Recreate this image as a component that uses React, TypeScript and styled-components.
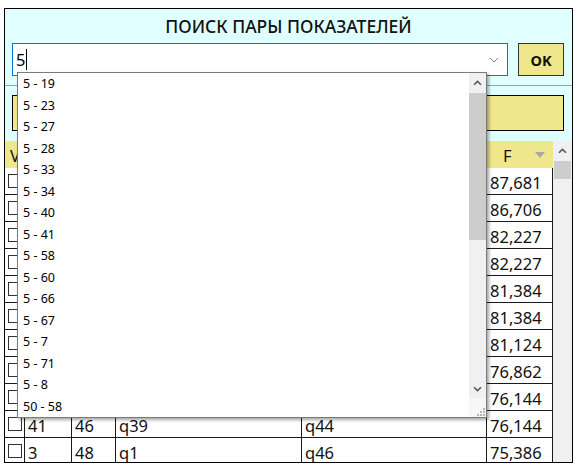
import React from 'react';
import styled, { createGlobalStyle } from 'styled-components';

const GlobalStyle = createGlobalStyle`
  html, body {
    margin: 0;
    padding: 0;
    background: #fff;
  }
  body {
    font-family: 'Noto Sans', 'Open Sans', sans-serif;
  }
`;

const Frame = styled.div`
  position: relative;
  box-sizing: border-box;
  margin: 8px 0 0 4px;
  width: 569px;
  height: 455px;
  border: 1px solid #000;
  background: #e0ffff;
  overflow: hidden;
  display: flex;
  flex-direction: column;
`;

const Title = styled.div`
  height: 34px;
  display: flex;
  align-items: center;
  justify-content: center;
  font-size: 17.5px;
  font-weight: 500;
  color: #111;
`;

const SearchRow = styled.div`
  display: flex;
  gap: 10px;
  padding: 0 8px 0 7px;
  height: 33px;
`;

const Combo = styled.div`
  flex: 1;
  box-sizing: border-box;
  border: 1px solid #0078d7;
  background: #fff;
  display: flex;
  align-items: center;
  padding: 0 8px 0 3px;
  font-size: 16.5px;
  color: #000;
`;

const Caret = styled.span`
  display: inline-block;
  width: 1px;
  height: 21px;
  background: #000;
  margin-left: 1px;
`;

const ComboValue = styled.div`
  flex: 1;
  display: flex;
  align-items: center;
`;

const OkButton = styled.button`
  box-sizing: border-box;
  width: 46px;
  height: 33px;
  border: 1px solid #333;
  background: #f0e68c;
  font-family: 'Noto Sans', sans-serif;
  font-size: 14.5px;
  font-weight: 700;
  color: #111;
  padding: 0;
`;

const Separator = styled.div`
  margin-top: 9px;
  height: 1px;
  background: #a0a0a0;
`;

const InfoBox = styled.div`
  box-sizing: border-box;
  margin: 9px 8px 0 7px;
  height: 36px;
  border: 1px solid #000;
  background: #f0e68c;
`;

const TableArea = styled.div`
  margin-top: 10px;
  flex: 1;
  display: flex;
  min-height: 0;
`;

const Grid = styled.div`
  width: 548px;
  background: #fff;
`;

const columns = '20px 47px 44px 186px 185px 66px';

const HeaderRow = styled.div`
  display: grid;
  grid-template-columns: ${columns};
  height: 27px;
  background: #f0e68c;
`;

const HeaderCell = styled.div`
  display: flex;
  align-items: center;
  justify-content: space-between;
  padding: 1px 8px 0 5px;
  font-size: 16.5px;
  color: #111;
  box-sizing: border-box;
`;

const Row = styled.div`
  display: grid;
  grid-template-columns: ${columns};
  height: 27px;
`;

const Cell = styled.div`
  box-sizing: border-box;
  display: flex;
  align-items: center;
  padding: 2px 0 0 3px;
  border-right: 1px solid #1a1a1a;
  border-bottom: 1px solid #1a1a1a;
  font-size: 16.5px;
  color: #111;
  white-space: nowrap;
`;

const CheckCell = styled(Cell)`
  padding: 0 0 0 3px;
`;

const Box = styled.span`
  box-sizing: border-box;
  width: 14px;
  height: 14px;
  border: 1px solid #333;
  background: #fff;
`;

const VScroll = styled.div`
  width: 19px;
  background: #f0f0f0;
  display: flex;
  flex-direction: column;
  align-items: center;
`;

const ArrowButton = styled.div<{ $h: number }>`
  height: ${p => p.$h}px;
  width: 100%;
  display: flex;
  align-items: center;
  justify-content: center;
`;

const Thumb = styled.div<{ $h: number; $w: number }>`
  width: ${p => p.$w}px;
  height: ${p => p.$h}px;
  background: #cdcdcd;
`;

const Spacer = styled.div`
  flex: 1;
`;

const Dropdown = styled.div`
  position: absolute;
  left: 12px;
  top: 63px;
  box-sizing: border-box;
  width: 470px;
  height: 346px;
  border: 1px solid #7a7a7a;
  background: #fff;
  box-shadow: 2px 2px 3px rgba(0, 0, 0, 0.35);
  display: flex;
`;

const List = styled.div`
  flex: 1;
  overflow: hidden;
`;

const Item = styled.div`
  height: 21.5px;
  line-height: 21.5px;
  padding-left: 5px;
  font-size: 12.5px;
  color: #000;
`;

const DropScroll = styled.div`
  width: 17px;
  background: #f0f0f0;
  display: flex;
  flex-direction: column;
`;

const Grip = styled.div`
  height: 19px;
  background: #f7f7f7;
  display: flex;
  align-items: flex-end;
  justify-content: flex-end;
`;

const Chevron: React.FC<{ down?: boolean }> = ({ down }) => (
  <svg width="9" height="6" viewBox="0 0 9 6">
    <path
      d={down ? 'M1 1.2 L4.5 4.6 L8 1.2' : 'M1 4.8 L4.5 1.4 L8 4.8'}
      fill="none"
      stroke="#5a5a5a"
      strokeWidth="1.6"
    />
  </svg>
);

const items = [
  '5 - 19', '5 - 23', '5 - 27', '5 - 28', '5 - 33', '5 - 34', '5 - 40', '5 - 41',
  '5 - 58', '5 - 60', '5 - 66', '5 - 67', '5 - 7', '5 - 71', '5 - 8', '50 - 58',
];

const rows = [
  ['5', '19', 'q5', 'q19', '87,681'],
  ['23', '40', 'q23', 'q40', '86,706'],
  ['5', '23', 'q5', 'q23', '82,227'],
  ['19', '23', 'q19', 'q23', '82,227'],
  ['5', '27', 'q5', 'q27', '81,384'],
  ['27', '40', 'q27', 'q40', '81,384'],
  ['5', '33', 'q5', 'q33', '81,124'],
  ['34', '41', 'q34', 'q41', '76,862'],
  ['5', '41', 'q5', 'q41', '76,144'],
  ['41', '46', 'q39', 'q44', '76,144'],
  ['3', '48', 'q1', 'q46', '75,386'],
];

const App: React.FC = () => {
  return (
    <>
      <GlobalStyle />
      <Frame>
        <Title>ПОИСК ПАРЫ ПОКАЗАТЕЛЕЙ</Title>
        <SearchRow>
          <Combo>
            <ComboValue>
              5<Caret />
            </ComboValue>
            <svg width="10" height="6" viewBox="0 0 10 6">
              <path d="M1 1 L5 5 L9 1" fill="none" stroke="#808080" strokeWidth="1" />
            </svg>
          </Combo>
          <OkButton>OK</OkButton>
        </SearchRow>
        <Separator />
        <InfoBox />
        <TableArea>
          <Grid>
            <HeaderRow>
              <HeaderCell>V</HeaderCell>
              <HeaderCell>№1</HeaderCell>
              <HeaderCell>№2</HeaderCell>
              <HeaderCell>Показатель 1</HeaderCell>
              <HeaderCell>Показатель 2</HeaderCell>
              <HeaderCell>
                <span style={{ paddingLeft: 11 }}>F</span>
                <svg width="10" height="6" viewBox="0 0 10 6">
                  <path d="M0 0 L10 0 L5 6 Z" fill="#a8a8a8" />
                </svg>
              </HeaderCell>
            </HeaderRow>
            {rows.map((r, i) => (
              <Row key={i}>
                <CheckCell>
                  <Box />
                </CheckCell>
                {r.map((v, j) => (
                  <Cell key={j}>{v}</Cell>
                ))}
              </Row>
            ))}
          </Grid>
          <VScroll>
            <ArrowButton $h={20}>
              <Chevron />
            </ArrowButton>
            <Thumb $h={18} $w={17} />
          </VScroll>
        </TableArea>
        <Dropdown>
          <List>
            {items.map(t => (
              <Item key={t}>{t}</Item>
            ))}
          </List>
          <DropScroll>
            <ArrowButton $h={20}>
              <Chevron />
            </ArrowButton>
            <Thumb $h={147} $w={17} />
            <Spacer />
            <ArrowButton $h={18}>
              <Chevron down />
            </ArrowButton>
            <Grip>
              <svg width="12" height="12" viewBox="0 0 12 12">
                {[
                  [9, 3], [6, 6], [9, 6], [3, 9], [6, 9], [9, 9],
                ].map(([x, y]) => (
                  <rect key={`${x}-${y}`} x={x} y={y} width="2" height="2" fill="#b4b4b4" />
                ))}
              </svg>
            </Grip>
          </DropScroll>
        </Dropdown>
      </Frame>
    </>
  );
};

export default App;
